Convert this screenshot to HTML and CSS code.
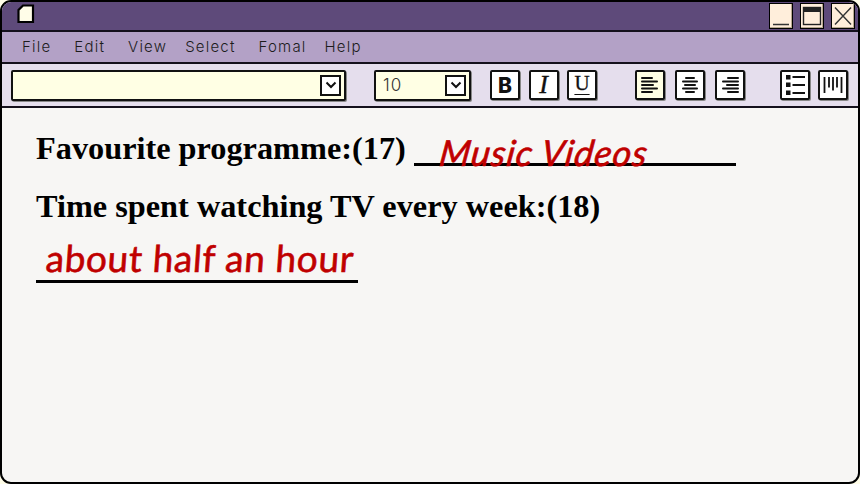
FILE: index.html
```html
<!DOCTYPE html>
<html lang="en">
<head>
<meta charset="utf-8">
<title>Favourite programme</title>
<link rel="stylesheet" href="styles.css">
</head>
<body>
<div class="window">
  <header class="titlebar">
    <svg class="doc" width="18" height="20" viewBox="0 0 18 20"><path d="M6 1.500H16V18H1.500V6Z" fill="#fffde8" stroke="#000" stroke-width="2.200"/></svg>
    <div class="controls">
      <button class="ctl"><svg width="22" height="24" viewBox="0 0 22 24"><path d="M3 20.500H19" stroke="#333" stroke-width="1.400"/></svg></button>
      <button class="ctl"><svg width="22" height="24" viewBox="0 0 22 24"><rect x="2.500" y="3.500" width="17" height="17" fill="none" stroke="#222" stroke-width="1.400"/><rect x="2.500" y="3" width="17" height="5" fill="#222"/></svg></button>
      <button class="ctl"><svg width="22" height="24" viewBox="0 0 22 24"><path d="M3 3.500L19 20.500M19 3.500L3 20.500" stroke="#333" stroke-width="1.400"/></svg></button>
    </div>
  </header>
  <nav class="menubar">
    <span class="menu m-file">File</span><span class="menu m-edit">Edit</span><span class="menu m-view">View</span><span class="menu m-select">Select</span><span class="menu m-fomal">Fomal</span><span class="menu">Help</span>
  </nav>
  <div class="toolbar">
    <div class="field field-font"><span class="drop"><svg width="12" height="8" viewBox="0 0 12 8"><path d="M1.500 1.500L6 6L10.500 1.500" fill="none" stroke="#111" stroke-width="2"/></svg></span></div>
    <div class="field field-size"><span class="size">10</span><span class="drop"><svg width="12" height="8" viewBox="0 0 12 8"><path d="M1.500 1.500L6 6L10.500 1.500" fill="none" stroke="#111" stroke-width="2"/></svg></span></div>
    <div class="group group-style">
      <span class="tool t-b">B</span><span class="tool t-i">I</span><span class="tool t-u">U</span>
    </div>
    <div class="group group-align">
      <span class="tool active"><svg width="20" height="20" viewBox="0 0 20 20"><path d="M2 3H12M2 6.500H17M2 10H13M2 13.500H17M2 17H12" stroke="#111" stroke-width="2" stroke-linecap="round"/></svg></span>
      <span class="tool"><svg width="20" height="20" viewBox="0 0 20 20"><path d="M6 3H14M3 6.500H17M5 10H15M3 13.500H17M6 17H14" stroke="#111" stroke-width="2" stroke-linecap="round"/></svg></span>
      <span class="tool"><svg width="20" height="20" viewBox="0 0 20 20"><path d="M8 3H18M3 6.500H18M7 10H18M3 13.500H18M8 17H18" stroke="#111" stroke-width="2" stroke-linecap="round"/></svg></span>
    </div>
    <div class="group group-list">
      <span class="tool"><svg width="22" height="22" viewBox="0 0 22 22"><path d="M8.500 3H21M8.500 11H21M8.500 19H21" stroke="#111" stroke-width="1.800"/><rect x="2" y="1" width="4.500" height="4.500" fill="#111"/><rect x="2" y="8.500" width="4.500" height="4.500" fill="#111"/><rect x="2" y="16.500" width="4.500" height="4.500" fill="#111"/></svg></span>
      <span class="tool"><svg width="22" height="22" viewBox="0 0 22 22"><path d="M2.500 3V19M7 3V13.500M11 3V16.500M15 3V13.500M19.500 3V19" stroke="#111" stroke-width="1.800"/></svg></span>
    </div>
  </div>
  <main class="content">
    <p class="line">Favourite programme:(17) <span class="blank blank-one"><span class="answer answer-one">Music Videos</span></span></p>
    <p class="line line-two">Time spent watching TV every week:(18)</p>
    <p class="line line-three"><span class="blank blank-two"><span class="answer answer-two">about half an hour</span></span></p>
  </main>
</div>
</body>
</html>
```
FILE: styles.css
```css
* { box-sizing: border-box; }
html, body { margin: 0; height: 100%; }
body { background: #fffde8; width: 860px; height: 484px; overflow: hidden; }
.window {
  width: 860px; height: 484px;
  border: 2px solid #000; border-radius: 11px;
  background: #f7f6f4;
  display: flex; flex-direction: column;
  overflow: hidden;
}
.titlebar {
  height: 30px; background: #5e4a7a;
  border-bottom: 2px solid #14101c;
  display: flex; align-items: center; justify-content: space-between;
  padding: 0 3px 0 15px;
  flex: none;
}
.doc { display: block; margin-top: -4px; }
.controls { display: flex; gap: 7px; margin-top: -1px; }
.ctl {
  width: 24px; height: 26px; padding: 0;
  background: #ffeedb; border: 1px solid #000;
  box-shadow: inset -1px -1px 0 #b8a890;
  display: flex; align-items: center; justify-content: center;
}
.menubar {
  height: 32px; flex: none;
  background: #b3a1c6; border-bottom: 2px solid #14101c;
  display: flex; align-items: center; gap: 23px;
  padding: 0 0 2px 20px;
  font: 300 15px/1 Inter, sans-serif; letter-spacing: 1.200px; color: #1c1c1c;
}
.menu.m-view, .menu.m-fomal { margin-right: -5px; }
.toolbar {
  height: 44px; flex: none;
  background: #e5deed; border-bottom: 2px solid #14101c;
  display: flex; align-items: center;
  padding: 0 0 0 9px;
}
.field {
  height: 31px; background: #ffffe4;
  border: 2px solid #111; border-radius: 2px;
  box-shadow: 1px 1px 0 #888;
  display: flex; align-items: center; justify-content: flex-end;
  padding-right: 3px;
}
.field-font { width: 335px; }
.field-size { width: 97px; margin-left: 28px; justify-content: space-between; padding-left: 7px; }
.size { font: 300 17px/1 Inter, sans-serif; letter-spacing: 1px; color: #333; }
.drop {
  width: 21px; height: 21px; background: #fff; border: 2px solid #111;
  display: flex; align-items: center; justify-content: center;
}
.group { display: flex; }
.group-style { margin-left: 19px; gap: 8.500px; }
.group-align { margin-left: 38px; gap: 10px; }
.group-list { margin-left: 35px; gap: 8px; }
.tool {
  width: 30px; height: 30px; background: #fff;
  border: 2px solid #111; border-radius: 2px;
  box-shadow: 1px 1px 0 #888;
  display: flex; align-items: center; justify-content: center;
  color: #111;
}
.tool.active { background: #ffffe4; }
.t-b { font: 800 21px/1 Inter, sans-serif; }
.t-i { font: italic 400 26px/1 "Liberation Serif", serif; -webkit-text-stroke: 0.4px #111; }
.t-u { font: 400 21px/1 "Liberation Serif", serif; -webkit-text-stroke: 0.3px #111; text-decoration: underline; text-underline-offset: 4px; text-decoration-thickness: 1px; padding-bottom: 3px; }
.content {
  flex: 1; padding: 24px 0 0 34px;
  font: 700 32.300px/1 "Liberation Serif", serif; color: #000;
}
.line { margin: 0; height: 36px; white-space: nowrap; }
.line-two { margin-top: 22px; }
.line-three { margin-top: 23px; height: 44px; }
.blank {
  display: inline-block; position: relative; vertical-align: -7px;
  height: 3px; border-bottom: 3px solid #000;
}
.blank-one { width: 322px; }
.blank-two { width: 322px; }
.answer {
  position: absolute; white-space: nowrap; font-weight: 400;
  font-family: Lato, sans-serif; color: #c00000;
  -webkit-text-stroke: 0.6px #c00000;
}
.answer-one { left: 26px; bottom: -7px; font-size: 36px; letter-spacing: 1px; font-style: italic; transform: skewX(-8deg); }
.answer-two { left: 10px; bottom: 4px; font-size: 37px; letter-spacing: 0.600px; transform: skewX(-4deg); }
```
